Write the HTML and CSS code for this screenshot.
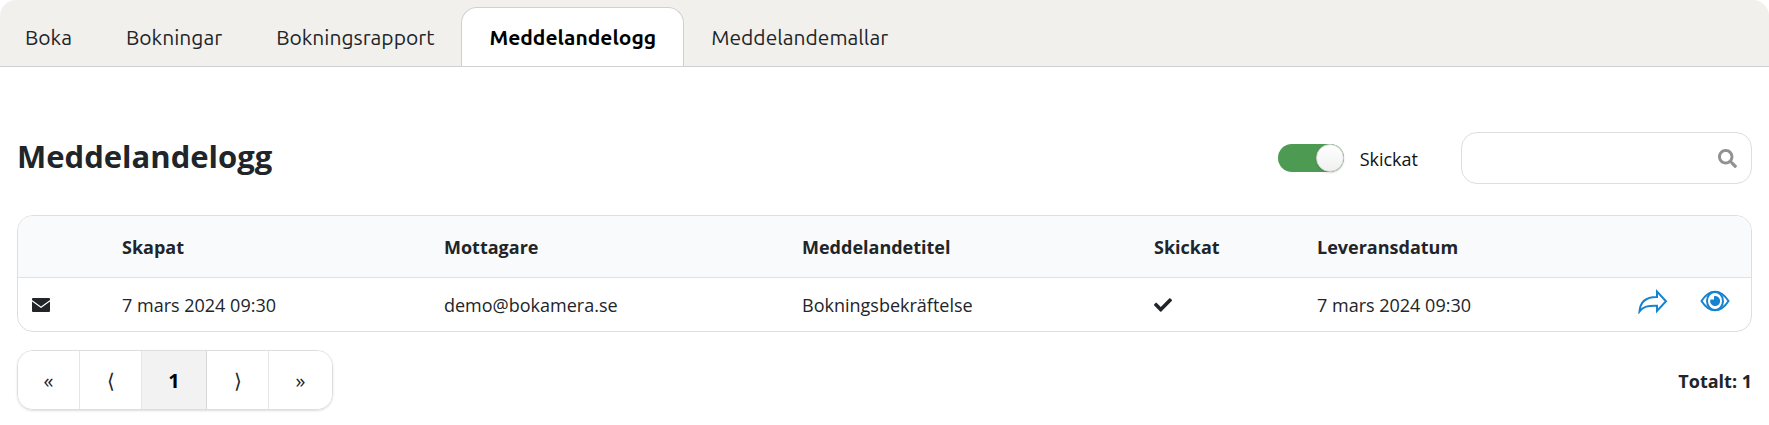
FILE: index.html
```
<!DOCTYPE html>
<html lang="sv">
  <head>
    <meta charset="UTF-8" />
    <meta name="viewport" content="width=device-width, initial-scale=1.0" />
    <title>Meddelandelogg</title>
    <link rel="stylesheet" href="styles.css">
  </head>
  <body>
    <nav class="tabs">
      <a href="#" class="tab">Boka</a>
      <a href="#" class="tab">Bokningar</a>
      <a href="#" class="tab">Bokningsrapport</a>
      <a href="#" class="tab active">Meddelandelogg</a>
      <a href="#" class="tab">Meddelandemallar</a>
    </nav>

    <main>
      <div class="toolbar">
        <h1>Meddelandelogg</h1>
        <label class="toggle">
          <input type="checkbox" checked />
          <span>Skickat</span>
        </label>
        <div class="search">
          <input type="text" aria-label="Sök" />
          <svg viewBox="0 0 512 512" width="19" height="19">
            <path d="M505 442.700L405.300 343c-4.500-4.500-10.600-7-17-7H372c27.600-35.300 44-79.700 44-128C416 93.100 322.900 0 208 0S0 93.100 0 208s93.100 208 208 208c48.300 0 92.700-16.400 128-44v16.300c0 6.400 2.500 12.500 7 17l99.700 99.700c9.400 9.400 24.600 9.400 33.900 0l28.300-28.300c9.400-9.400 9.400-24.600.1-34zM208 336c-70.700 0-128-57.200-128-128 0-70.700 57.200-128 128-128 70.700 0 128 57.200 128 128 0 70.700-57.200 128-128 128z" />
          </svg>
        </div>
      </div>

      <div class="table-wrap">
        <table>
          <colgroup>
            <col class="col-type" />
            <col class="col-created" />
            <col class="col-recipient" />
            <col class="col-title" />
            <col class="col-sent" />
            <col class="col-delivery" />
            <col />
          </colgroup>
          <thead>
            <tr>
              <th></th>
              <th>Skapat</th>
              <th>Mottagare</th>
              <th>Meddelandetitel</th>
              <th>Skickat</th>
              <th>Leveransdatum</th>
              <th></th>
            </tr>
          </thead>
          <tbody>
            <tr>
              <td>
                <svg class="icon" viewBox="0 0 18 14" width="18" height="14">
                  <path d="M1 0h16a1 1 0 0 1 1 1v1L9 8.500 0 2V1a1 1 0 0 1 1-1zM0 3.500l9 6.500 9-6.500V13a1 1 0 0 1-1 1H1a1 1 0 0 1-1-1z" />
                </svg>
              </td>
              <td>7 mars 2024 09:30</td>
              <td>demo@bokamera.se</td>
              <td>Bokningsbekräftelse</td>
              <td>
                <svg class="icon" viewBox="0 0 512 512" width="18" height="18">
                  <path d="M173.900 439.400l-166.400-166.400c-10-10-10-26.200 0-36.200l36.200-36.200c10-10 26.200-10 36.200 0L192 312.700 432.100 72.600c10-10 26.200-10 36.200 0l36.200 36.200c10 10 10 26.200 0 36.200l-294.400 294.400c-10 10-26.200 10-36.200 0z" />
                </svg>
              </td>
              <td>7 mars 2024 09:30</td>
              <td>
                <div class="actions">
                  <button type="button" aria-label="Skicka igen">
                    <svg viewBox="0 0 30 26" width="30" height="26">
                      <path d="M19 3.500v5.500C8.500 8.800 2.300 13 1.500 23.500 5 18.500 10 17.500 19 17.700V23l9-9.700z" />
                    </svg>
                  </button>
                  <button type="button" aria-label="Visa">
                    <svg viewBox="0 0 30 26" width="30" height="26">
                      <path d="M1.500 13C5 7.500 9.500 3.700 15 3.700S25 7.500 28.500 13C25 18.500 20.500 22.300 15 22.300S5 18.500 1.500 13z" />
                      <ellipse cx="15" cy="13" rx="8" ry="9" />
                      <path class="pupil" d="M14 8.200v3.300h-3.600A5 5 0 1 0 14 8.200z" />
                    </svg>
                  </button>
                </div>
              </td>
            </tr>
          </tbody>
        </table>
      </div>

      <div class="footer">
        <div class="pagination">
          <button type="button">«</button>
          <button type="button">⟨</button>
          <button type="button" class="current">1</button>
          <button type="button">⟩</button>
          <button type="button">»</button>
        </div>
        <strong>Totalt: 1</strong>
      </div>
    </main>
  </body>
</html>
```
FILE: styles.css
```
* {
  margin: 0;
  padding: 0;
  box-sizing: border-box;
}

body {
  font-family: "Open Sans", "Noto Sans", sans-serif;
  font-size: 18px;
  line-height: 24px;
  color: #212529;
  background: #fff;
}

button,
input {
  font: inherit;
  color: inherit;
}

/* Tabs */
.tabs {
  display: flex;
  align-items: flex-end;
  height: 67px;
  background: #f2f0ec;
  border-bottom: 1px solid #d0d0d0;
  border-radius: 16px 16px 0 0;
}

.tab {
  height: 59px;
  padding: 17px 26px 0;
  border: 1px solid transparent;
  border-bottom: 0;
  border-radius: 16px 16px 0 0;
  font-family: Ubuntu, "Noto Sans", sans-serif;
  font-size: 21px;
  color: #212529;
  text-decoration: none;
}

.tab:first-child {
  padding-left: 24px;
}

.tab.active {
  padding: 17px 27px 0;
  background: #fff;
  border-color: #d0d0d0;
  font-weight: 700;
  color: #000;
}

main {
  padding: 65px 17px 16px;
}

/* Heading, filter and search */
.toolbar {
  display: flex;
  align-items: center;
  margin-bottom: 31px;
}

h1 {
  margin-right: auto;
  padding-bottom: 4px;
  font-size: 31px;
  line-height: 40px;
}

.toggle {
  display: flex;
  align-items: center;
  gap: 16px;
  margin-right: 43px;
  line-height: 28px;
  color: #111;
}

.toggle span {
  padding-top: 2px;
}

.toggle input {
  appearance: none;
  display: flex;
  justify-content: flex-end;
  width: 66px;
  height: 28px;
  border-radius: 14px;
  background: #ccc;
}

.toggle input:checked {
  background: #4d9b52;
}

.toggle input::before {
  content: "";
  width: 28px;
  height: 28px;
  border: 1px solid #d4d4d5;
  border-radius: 50%;
  background: linear-gradient(#fff, #f0f0f0);
  box-shadow: 0 1px 2px rgba(0, 0, 0, 0.15);
  box-sizing: border-box;
}

.search {
  display: flex;
  align-items: center;
  width: 291px;
  height: 52px;
  padding: 0 14px;
  border: 1px solid #dededf;
  border-radius: 16px;
}

.search input {
  flex: 1;
  min-width: 0;
  border: 0;
  outline: 0;
  background: transparent;
}

.search svg {
  fill: #919191;
}

/* Message table */
.table-wrap {
  border: 1px solid #dededf;
  border-radius: 16px;
  overflow: hidden;
}

table {
  width: 100%;
  table-layout: fixed;
  border-collapse: collapse;
}

.col-type {
  width: 90px;
}

.col-created {
  width: 322px;
}

.col-recipient {
  width: 358px;
}

.col-title {
  width: 352px;
}

.col-sent {
  width: 163px;
}

.col-delivery {
  width: 250px;
}

th,
td {
  padding: 2px 14px 0;
  text-align: left;
}

th {
  height: 61px;
  background: #f9fafb;
  border-bottom: 1px solid #e2e2e3;
}

td {
  height: 54px;
}

.icon {
  display: block;
  fill: #212529;
}

.actions {
  display: flex;
  justify-content: flex-end;
  gap: 32px;
  padding: 0 7px 8px 0;
}

.actions button {
  border: 0;
  background: none;
  cursor: pointer;
}

.actions svg {
  display: block;
  fill: none;
  stroke: #1683d0;
  stroke-width: 2;
}

.actions .pupil {
  fill: #1683d0;
  stroke: none;
}

/* Pagination */
.footer {
  display: flex;
  justify-content: space-between;
  align-items: center;
  margin-top: 18px;
}

.footer strong {
  padding-top: 2px;
}

.pagination {
  display: flex;
  border: 1px solid #dededf;
  border-radius: 16px;
  box-shadow: 0 1px 2px rgba(34, 36, 38, 0.15);
  overflow: hidden;
}

.pagination button {
  width: 62px;
  height: 58px;
  padding-top: 2px;
  border: 0;
  border-right: 1px solid #e6e6e6;
  background: #fff;
  font-size: 20px;
  cursor: pointer;
}

.pagination button:last-child {
  width: 63px;
  border-right: 0;
}

.pagination .current {
  width: 65px;
  border-right-color: #d8d8d8;
  background: #f2f2f2;
  font-weight: 700;
  color: #000;
}
```
